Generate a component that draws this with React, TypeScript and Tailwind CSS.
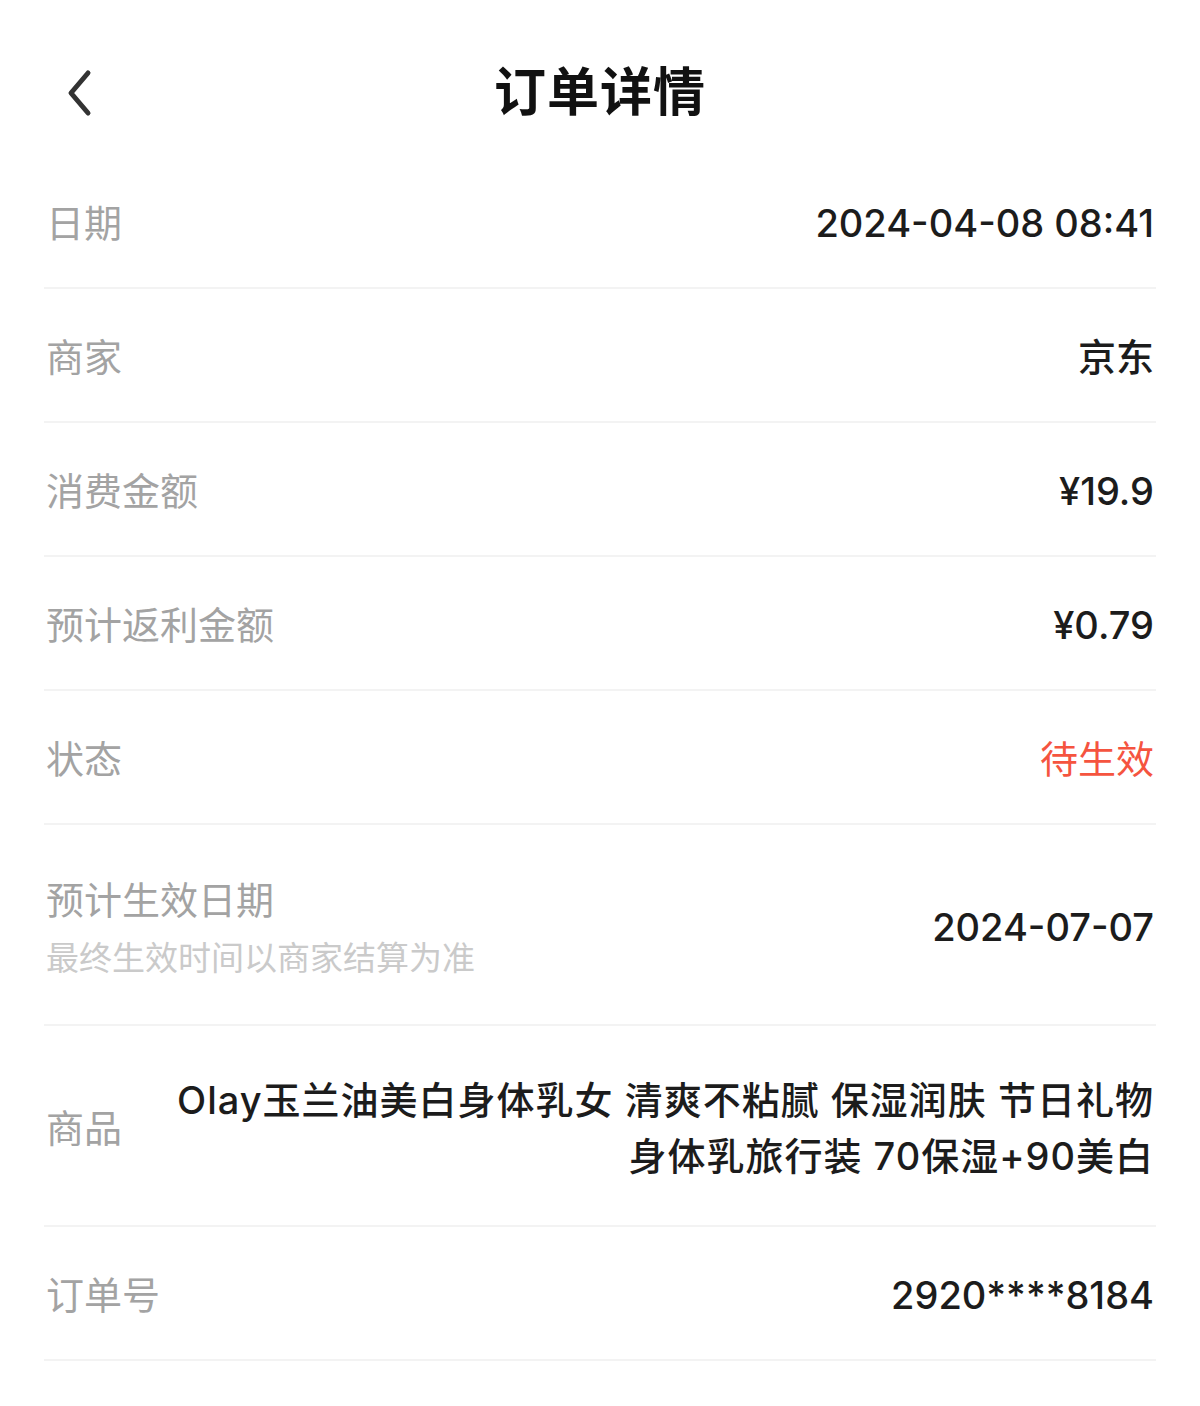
import React from "react";

const font = { fontFamily: '"Inter", "Noto Sans CJK SC", sans-serif' };

type Row = { label: string; value: React.ReactNode; sub?: string; tall?: boolean; red?: boolean };

const rows: Row[] = [
  { label: "日期", value: "2024-04-08 08:41" },
  { label: "商家", value: "京东" },
  { label: "消费金额", value: "¥19.9" },
  { label: "预计返利金额", value: "¥0.79" },
  { label: "状态", value: "待生效", red: true },
  { label: "预计生效日期", value: "2024-07-07", sub: "最终生效时间以商家结算为准", tall: true },
];

export default function App() {
  return (
    <div className="w-[1200px] min-h-[1406px] bg-white" style={font}>
      <div className="relative flex h-[155px] items-center justify-center pt-[30px]">
        <button className="absolute left-[62px] top-[68px] flex h-[50px] w-[34px] items-center justify-center">
          <svg width="28" height="48" viewBox="0 0 28 48" fill="none">
            <path d="M23 4 L6 24 L23 44" stroke="#333" strokeWidth="5" strokeLinecap="round" strokeLinejoin="round" />
          </svg>
        </button>
        <h1 className="text-[52px] font-bold tracking-[1px] text-[#111]">订单详情</h1>
      </div>

      <div className="px-[44px]">
        {rows.map((r) => (
          <div
            key={r.label}
            className={`flex items-center justify-between border-b-2 border-[#f3f3f3] px-[2px] pt-[4px] ${r.tall ? "h-[201px]" : "h-[134px]"}`}
          >
            <div className="flex flex-col">
              <span className="text-[38px] leading-[48px] text-[#a3a3a3]">{r.label}</span>
              {r.sub && <span className="mt-[14px] text-[33px] leading-[40px] text-[#cacaca]">{r.sub}</span>}
            </div>
            <span className={`text-[38px] leading-[48px] ${r.red ? "text-[#f5543f]" : "font-medium text-[#1c1c1c]"}`}>{r.value}</span>
          </div>
        ))}

        <div className="flex h-[201px] items-center justify-between gap-[20px] border-b-2 border-[#f3f3f3] px-[2px] pt-[4px]">
          <span className="shrink-0 text-[38px] leading-[48px] text-[#a3a3a3]">商品</span>
          <span className="text-right text-[38px] font-medium leading-[56px] tracking-[1px] text-[#1c1c1c]">
            Olay玉兰油美白身体乳女 清爽不粘腻 保湿润肤 节日礼物 身体乳旅行装 70保湿+90美白
          </span>
        </div>

        <div className="flex h-[134px] items-center justify-between border-b-2 border-[#f3f3f3] px-[2px] pt-[4px]">
          <span className="text-[38px] leading-[48px] text-[#a3a3a3]">订单号</span>
          <span className="text-[38px] font-medium leading-[48px] text-[#1c1c1c]">2920****8184</span>
        </div>
      </div>
    </div>
  );
}
